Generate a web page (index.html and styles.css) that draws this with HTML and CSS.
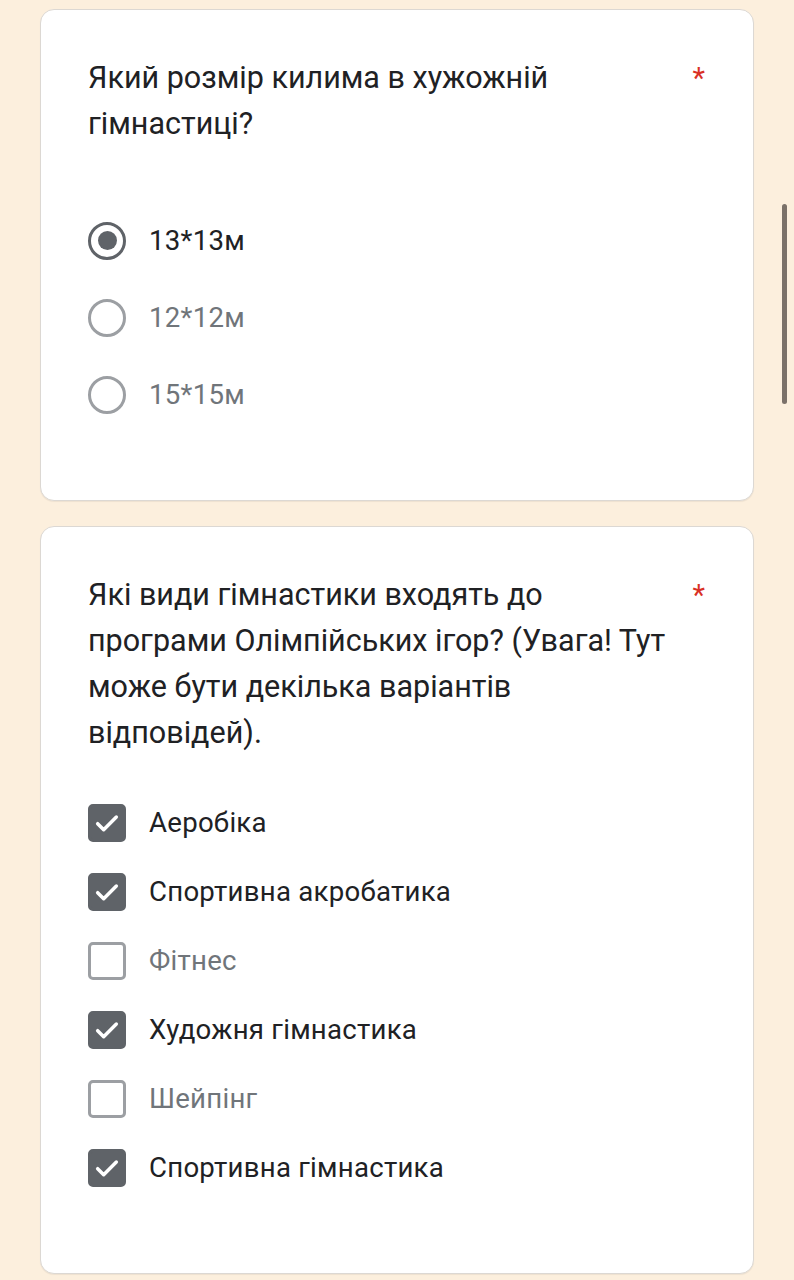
FILE: index.html
```html
<!DOCTYPE html>
<html lang="uk">
<head>
<meta charset="utf-8">
<link rel="stylesheet" href="styles.css">
</head>
<body>
<main class="page">
  <section class="card card-radio">
    <div class="question">
      <div class="q-text">Який розмір килима в хужожній гімнастиці?</div>
      <span class="req">*</span>
    </div>
    <div class="options radios">
      <div class="opt selected"><span class="radio"><span class="dot"></span></span><span class="label">13*13м</span></div>
      <div class="opt"><span class="radio"></span><span class="label">12*12м</span></div>
      <div class="opt"><span class="radio"></span><span class="label">15*15м</span></div>
    </div>
  </section>

  <section class="card card-check">
    <div class="question">
      <div class="q-text">Які види гімнастики входять до програми Олімпійських ігор? (Увага! Тут може бути декілька варіантів відповідей).</div>
      <span class="req">*</span>
    </div>
    <div class="options checks">
      <div class="opt checked"><span class="box"><svg viewBox="0 0 24 24"><path d="M5 12.5l4.5 4.5L19 7.5"/></svg></span><span class="label">Аеробіка</span></div>
      <div class="opt checked"><span class="box"><svg viewBox="0 0 24 24"><path d="M5 12.5l4.5 4.5L19 7.5"/></svg></span><span class="label">Спортивна акробатика</span></div>
      <div class="opt"><span class="box"></span><span class="label">Фітнес</span></div>
      <div class="opt checked"><span class="box"><svg viewBox="0 0 24 24"><path d="M5 12.5l4.5 4.5L19 7.5"/></svg></span><span class="label">Художня гімнастика</span></div>
      <div class="opt"><span class="box"></span><span class="label">Шейпінг</span></div>
      <div class="opt checked"><span class="box"><svg viewBox="0 0 24 24"><path d="M5 12.5l4.5 4.5L19 7.5"/></svg></span><span class="label">Спортивна гімнастика</span></div>
    </div>
  </section>
</main>
<div class="scrollbar"></div>
</body>
</html>
```

FILE: styles.css
```css
html, body {
  margin: 0;
  padding: 0;
}
body {
  background: #fcefdd;
  font-family: Roboto, "Noto Sans", sans-serif;
  color: #202124;
  width: 794px;
  height: 1280px;
  overflow: hidden;
}
.page {
  padding: 9px 40px 0 40px;
  display: flex;
  flex-direction: column;
  gap: 25px;
}
.card {
  background: #ffffff;
  border: 1px solid #dcd8d3;
  border-radius: 14px;
  box-shadow: 0 1px 1px rgba(0,0,0,0.06);
  padding: 45px 48px 0 47px;
}
.card-radio { height: 445px; }
.card-check { height: 701px; }
.question {
  display: flex;
  align-items: flex-start;
}
.q-text {
  width: 596px;
  font-size: 30.5px;
  line-height: 46px;
  color: #202124;
}
.req {
  color: #d93025;
  font-size: 29px;
  line-height: 46px;
  margin-left: 14px;
}
.options {
  display: flex;
  flex-direction: column;
}
.radios { margin-top: 55px; }
.checks { margin-top: 32px; }
.opt {
  display: flex;
  align-items: center;
  gap: 23px;
  font-size: 27.6px;
  color: #70757a;
}
.label { letter-spacing: 0.25px; }
.radios .opt { height: 77px; }
.checks .opt { height: 69px; }
.opt.selected, .opt.checked { color: #202124; }
.radio {
  width: 38px;
  height: 38px;
  box-sizing: border-box;
  border: 3.5px solid #9c9fa3;
  border-radius: 50%;
  display: flex;
  align-items: center;
  justify-content: center;
  flex: none;
}
.selected .radio { border-color: #5f6368; }
.dot {
  width: 19px;
  height: 19px;
  border-radius: 50%;
  background: #5f6368;
}
.box {
  width: 38px;
  height: 38px;
  box-sizing: border-box;
  border: 3.5px solid #9c9fa3;
  border-radius: 5px;
  display: flex;
  align-items: center;
  justify-content: center;
  flex: none;
}
.checked .box {
  background: #5f6368;
  border-color: #5f6368;
}
.box svg {
  width: 36px;
  height: 36px;
  fill: none;
  stroke: #ffffff;
  stroke-width: 2.6;
  stroke-linecap: round;
  stroke-linejoin: round;
}
.scrollbar {
  position: fixed;
  left: 782px;
  top: 204px;
  width: 5px;
  height: 200px;
  border-radius: 3px;
  background: #7b7169;
}
```
